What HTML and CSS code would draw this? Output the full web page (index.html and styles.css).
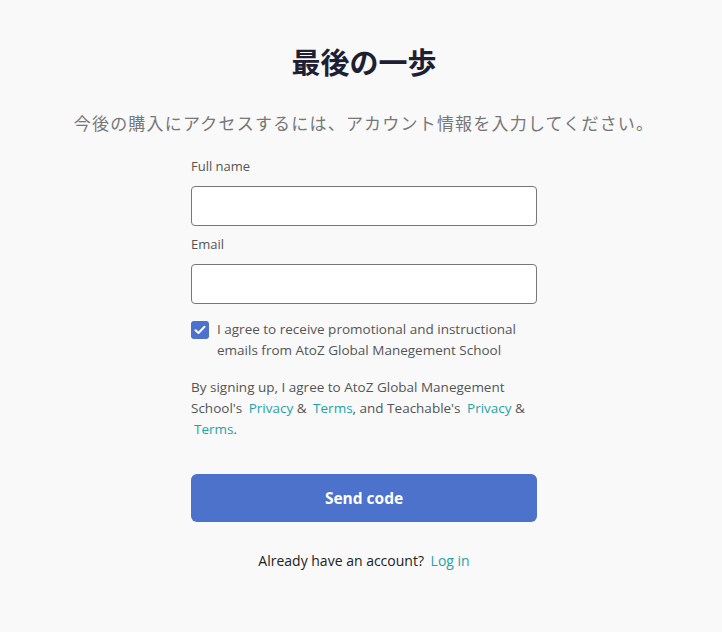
FILE: index.html
```html
<!DOCTYPE html>
<html lang="ja">
<head>
<meta charset="utf-8">
<link rel="stylesheet" href="styles.css">
</head>
<body>
<main class="page">
  <h1 class="title">最後の一歩</h1>
  <p class="subtitle">今後の購入にアクセスするには、アカウント情報を入力してください。</p>
  <form class="form">
    <label class="label">Full name</label>
    <div class="input"></div>
    <label class="label">Email</label>
    <div class="input"></div>
    <div class="check-row">
      <span class="checkbox">
        <svg width="12" height="10" viewBox="0 0 12 10"><path d="M1.5 5.2 L4.5 8 L10.5 1.8" fill="none" stroke="#fff" stroke-width="2" stroke-linecap="round" stroke-linejoin="round"/></svg>
      </span>
      <span class="check-text">I agree to receive promotional and instructional emails from AtoZ Global Manegement School</span>
    </div>
    <p class="terms">By signing up, I agree to AtoZ Global Manegement School's <a class="link">Privacy</a> &amp; <a class="link">Terms</a>, and Teachable's <a class="link">Privacy</a> &amp; <a class="link">Terms</a>.</p>
    <button type="button" class="btn">Send code</button>
    <p class="login">Already have an account? <a class="link">Log in</a></p>
  </form>
</main>
</body>
</html>
```
FILE: styles.css
```css
html, body { margin: 0; padding: 0; background: #f9f9f9; }
body { font-family: "Open Sans", "Noto Sans CJK JP", sans-serif; color: #555; }
.page { display: flex; flex-direction: column; align-items: center; padding-top: 40px; padding-left: 6px; }
.title { margin: 0; font-family: "Noto Sans CJK JP", sans-serif; font-size: 29px; font-weight: 700; color: #1d2033; line-height: 42px; }
.subtitle { margin: 29px 0 0; font-family: "Noto Sans CJK JP", sans-serif; font-size: 17px; letter-spacing: 1.2px; color: #777; line-height: 24px; }
.form { width: 346px; display: flex; flex-direction: column; margin-top: 22px; }
.label { font-size: 13px; line-height: 18px; color: #555; margin-bottom: 11px; }
.input { height: 38px; border: 1px solid #777; border-radius: 4px; background: #fff; margin-bottom: 9px; }
.check-row { display: flex; gap: 8px; margin-top: 8px; }
.checkbox { flex: none; width: 18px; height: 18px; border-radius: 3px; background: #4c72cc; display: flex; align-items: center; justify-content: center; }
.check-text { font-size: 13.5px; line-height: 21px; color: #555; margin-top: -2px; }
.terms { margin: 16px 0 0; font-size: 13.5px; line-height: 21px; color: #555; }
.link { color: #1fa3a6; margin-left: 3px; display: inline-block; }
.btn { margin-top: 34px; height: 48px; border: 0; border-radius: 6px; background: #4c72cc; color: #fff; font-family: "Open Sans", sans-serif; font-size: 15.5px; font-weight: 700; }
.login { margin: 29px 0 0; text-align: center; font-size: 14px; color: #222; line-height: 20px; }
```
